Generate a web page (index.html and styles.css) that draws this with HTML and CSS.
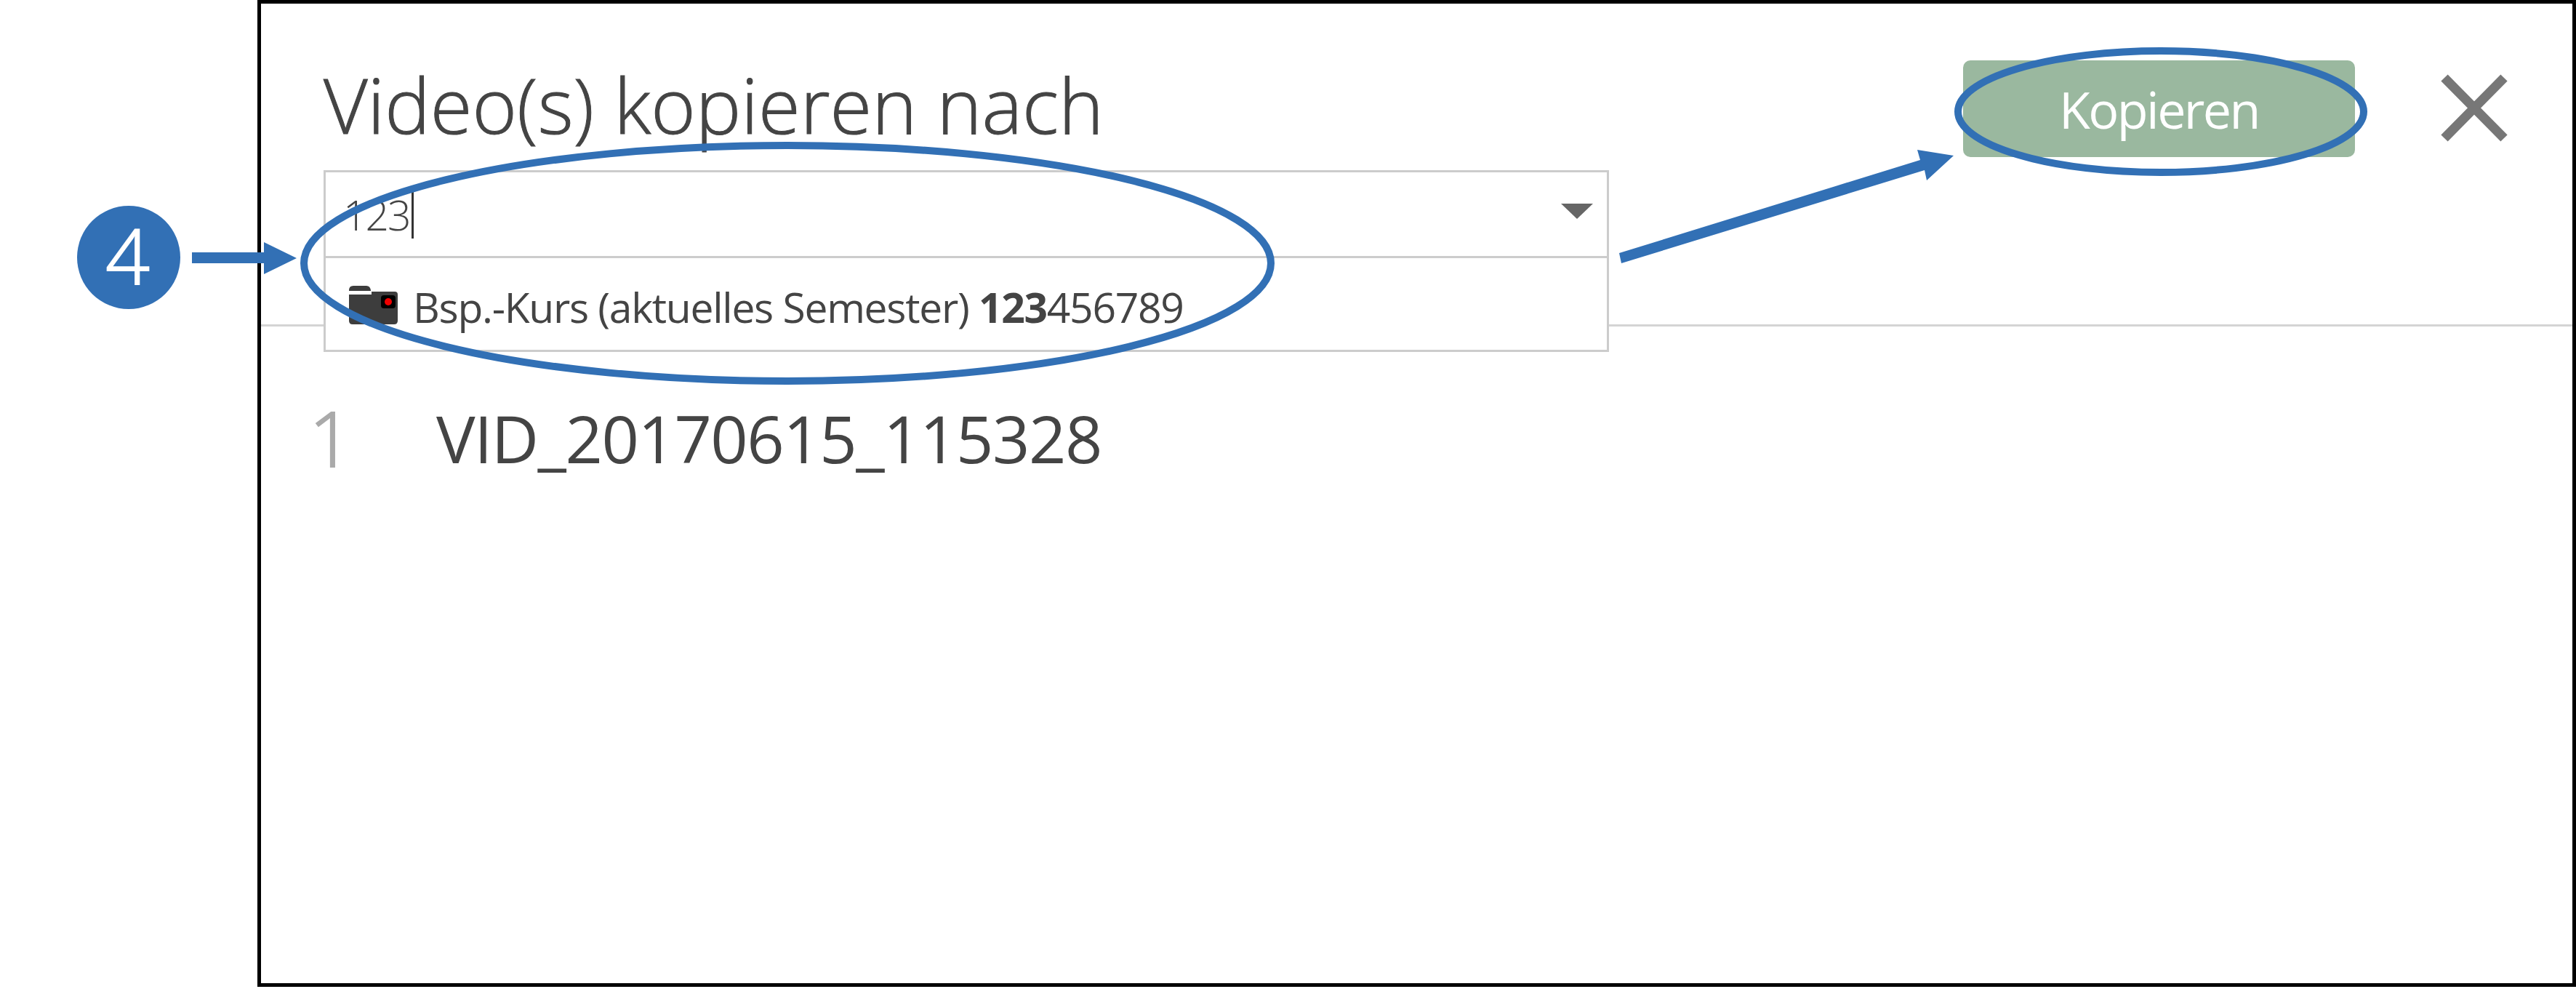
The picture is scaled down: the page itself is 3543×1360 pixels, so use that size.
FILE: index.html
```html
<!DOCTYPE html>
<html lang="de">
<head>
<meta charset="utf-8">
<title>Video(s) kopieren nach</title>
<link rel="stylesheet" href="styles.css">
</head>
<body>
<main class="dialog">
  <header class="dialog-head">
    <div class="dest">
      <h1 class="title">Video(s) kopieren nach</h1>
      <div class="combo">
        <div class="combo-input">
          <span class="combo-value">123</span><span class="text-caret"></span>
          <span class="combo-arrow"></span>
        </div>
        <div class="combo-list">
          <svg class="folder" viewBox="0 0 67 53" aria-hidden="true">
            <path d="M0 6Q0 0 6 0H24Q29 0 30 6V7H0Z" fill="#3d3d3d"/>
            <path d="M0 12H31V8H63Q67 8 67 12V48Q67 53 62 53H5Q0 53 0 48Z" fill="#3d3d3d"/>
            <rect x="44" y="13" width="20" height="18" rx="4" fill="#000"/>
            <circle cx="54" cy="22" r="5" fill="#f00000"/>
          </svg>
          <span class="option">Bsp.-Kurs (aktuelles Semester) <b class="match">123</b>456789</span>
        </div>
      </div>
    </div>
    <button class="copy" type="button">Kopieren</button>
    <svg class="close" viewBox="0 0 92 93" aria-hidden="true">
      <path d="M5 5L87 88M87 5L5 88" fill="none" stroke="#777" stroke-width="13"/>
    </svg>
  </header>
  <section class="files">
    <span class="file-index">1</span>
    <span class="file-name">VID_20170615_115328</span>
  </section>
</main>

<div class="badge">4</div>
<svg class="marks" viewBox="0 0 3543 1360" aria-hidden="true">
  <polygon points="264,347 363,347 363,333 408,355 363,377 363,362 264,362" fill="#3270b5"/>
  <ellipse cx="1083" cy="362" rx="665" ry="162" fill="none" stroke="#3270b5" stroke-width="10"/>
  <ellipse cx="2972" cy="153.5" rx="279" ry="83.5" fill="none" stroke="#3270b5" stroke-width="10"/>
  <polygon points="2227,348 2230,362 2647,234 2650,248 2687,214 2637,206 2641,220" fill="#3270b5"/>
</svg>
</body>
</html>
```
FILE: styles.css
```css
* { box-sizing: border-box; }
html, body { margin: 0; background: #fff; }
body {
  position: relative;
  width: 3543px;
  height: 1360px;
  overflow: hidden;
  font-family: "Open Sans", "Noto Sans", sans-serif;
  color: #444;
}
.dialog {
  width: 3189px;
  height: 1357px;
  margin-left: 354px;
  border: 5px solid #000;
  background: #fff;
}
.dialog-head {
  display: flex;
  align-items: flex-start;
  height: 444px;
  padding-left: 86px;
  border-bottom: 3px solid #d4d4d4;
}
.dest { width: 1768px; }
.title {
  margin: 0 0 23px;
  padding-top: 72px;
  font-size: 105px;
  line-height: 134px;
  font-weight: 300;
  -webkit-text-stroke: 1px #444;
  color: #444;
  white-space: nowrap;
}
.combo { position: relative; }
.combo-input {
  display: flex;
  align-items: center;
  height: 121px;
  padding: 2px 19px 0 24px;
  border: 3px solid #ccc;
  background: #fff;
}
.combo-value { font-size: 57px; font-weight: 300; line-height: 65px; letter-spacing: -2px; color: #444; }
.text-caret { width: 3px; height: 65px; margin-left: 2px; background: #333; }
.combo-arrow {
  width: 0;
  height: 0;
  margin: -10px 0 0 auto;
  border-left: 22px solid transparent;
  border-right: 22px solid transparent;
  border-top: 21px solid #666;
}
.combo-list {
  position: absolute;
  top: 100%;
  left: 0;
  right: 0;
  display: flex;
  align-items: center;
  gap: 21px;
  height: 129px;
  padding-left: 32px;
  border: 3px solid #ccc;
  border-top: 0;
  background: #fff;
}
.folder { width: 67px; height: 53px; flex: none; margin-top: 3px; }
.option {
  padding-top: 8px;
  font-size: 57px;
  font-weight: 400;
  letter-spacing: -1.3px;
  white-space: nowrap;
  color: #444;
}
.match { font-weight: 700; }
.copy {
  width: 539px;
  height: 133px;
  margin: 78px 0 0 487px;
  padding: 0;
  border: 0;
  border-radius: 10px;
  background: #9ab89f;
  color: #fff;
  font: 400 70px "Open Sans", "Noto Sans", sans-serif;
  letter-spacing: -2.6px;
}
.close { width: 92px; height: 93px; margin: 97px 0 0 118px; flex: none; }
.files {
  display: flex;
  align-items: flex-start;
  padding: 88px 0 0 66px;
}
.file-index {
  width: 175px;
  font-size: 105px;
  line-height: 130px;
  font-weight: 300;
  -webkit-text-stroke: 2px #aaa;
  color: #aaa;
}
.file-name {
  font-size: 90px;
  line-height: 130px;
  font-weight: 400;
  letter-spacing: -1.5px;
  color: #444;
  white-space: nowrap;
}
.badge {
  position: absolute;
  left: 106px;
  top: 283px;
  width: 142px;
  height: 142px;
  padding-right: 3px;
  border-radius: 50%;
  background: #3270b5;
  color: #fff;
  font-size: 106px;
  font-weight: 300;
  -webkit-text-stroke: 2px #fff;
  line-height: 134px;
  text-align: center;
}
.marks {
  position: absolute;
  left: 0;
  top: 0;
  width: 3543px;
  height: 1360px;
  pointer-events: none;
}
```
